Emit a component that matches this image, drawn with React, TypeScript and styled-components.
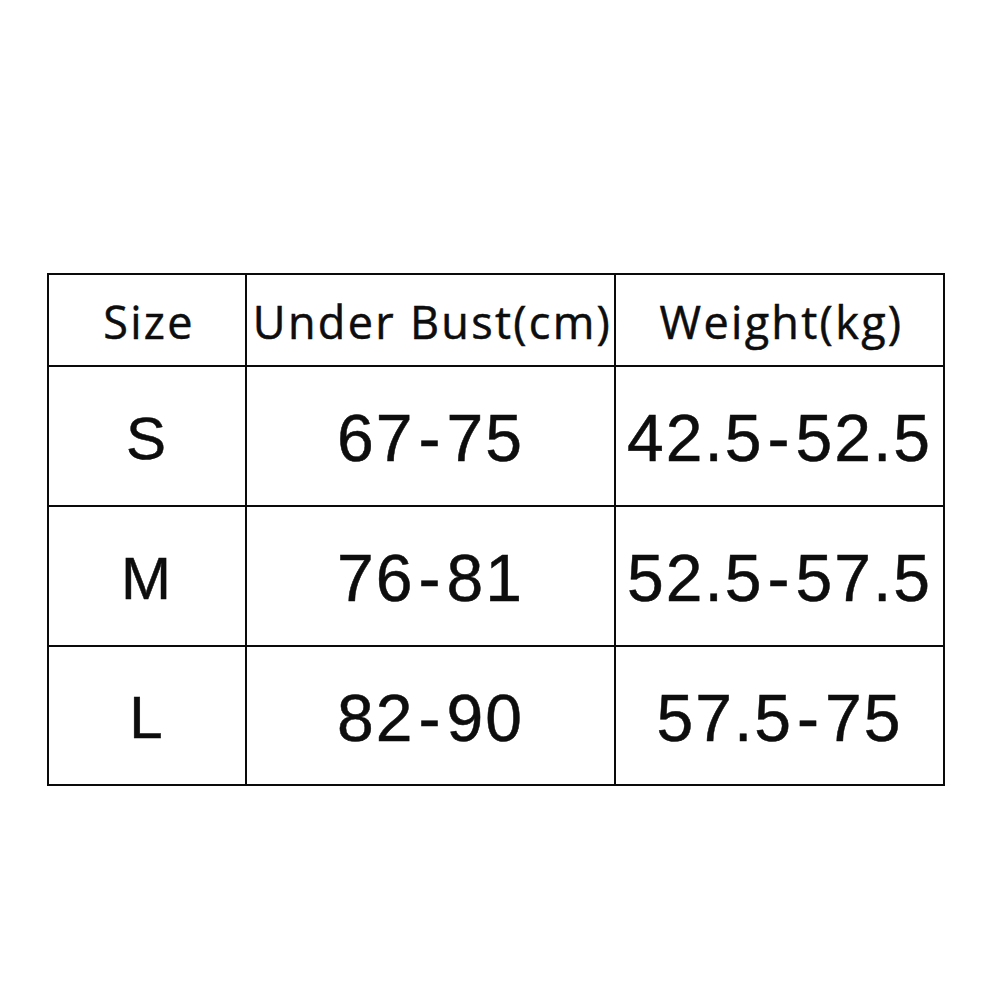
import React from 'react';
import styled, { createGlobalStyle } from 'styled-components';

const GlobalStyle = createGlobalStyle`
  html, body {
    margin: 0;
    padding: 0;
    background: #ffffff;
  }
`;

const Page = styled.div`
  width: 1000px;
  height: 1000px;
  box-sizing: border-box;
  padding: 273px 0 0 47px;
  background: #ffffff;
`;

const Chart = styled.div`
  display: grid;
  grid-template-columns: 198px 369px 329px;
  grid-template-rows: 92px 140px 140px 139px;
  width: max-content;
  border-top: 2px solid #0a0a0a;
  border-left: 2px solid #0a0a0a;
`;

const Cell = styled.div<{ $head?: boolean; $size?: boolean }>`
  box-sizing: border-box;
  display: flex;
  align-items: center;
  justify-content: center;
  border-right: 2px solid #0a0a0a;
  border-bottom: 2px solid #0a0a0a;
  color: #0d0d0d;
  white-space: nowrap;
  font-family: ${(p) => (p.$head ? '"Open Sans", "Noto Sans", sans-serif' : '"Liberation Sans", Arial, sans-serif')};
  font-weight: 400;
  font-size: ${(p) => (p.$head ? '45px' : p.$size ? '60px' : '66px')};
  letter-spacing: ${(p) => (p.$head ? '2.3px' : '2px')};
  padding-top: ${(p) => (p.$head ? '2px' : '4px')};
  padding-left: ${(p) => (p.$head ? '4px' : '0')};
  -webkit-text-stroke: 0.5px #0d0d0d;
`;

const Dash = styled.span`
  margin: 0 4px;
`;

const headers = ['Size', 'Under Bust(cm)', 'Weight(kg)'];

const rows = [
  ['S', '67-75', '42.5-52.5'],
  ['M', '76-81', '52.5-57.5'],
  ['L', '82-90', '57.5-75'],
];

function Range({ value }: { value: string }) {
  const [from, to] = value.split('-');
  if (to === undefined) return <>{value}</>;
  return (
    <>
      {from}
      <Dash>-</Dash>
      {to}
    </>
  );
}

export default function App() {
  return (
    <>
      <GlobalStyle />
      <Page>
        <Chart>
          {headers.map((h) => (
            <Cell key={h} $head>
              {h}
            </Cell>
          ))}
          {rows.map((r) =>
            r.map((v, i) => (
              <Cell key={r[0] + i} $size={i === 0}>
                <Range value={v} />
              </Cell>
            ))
          )}
        </Chart>
      </Page>
    </>
  );
}
